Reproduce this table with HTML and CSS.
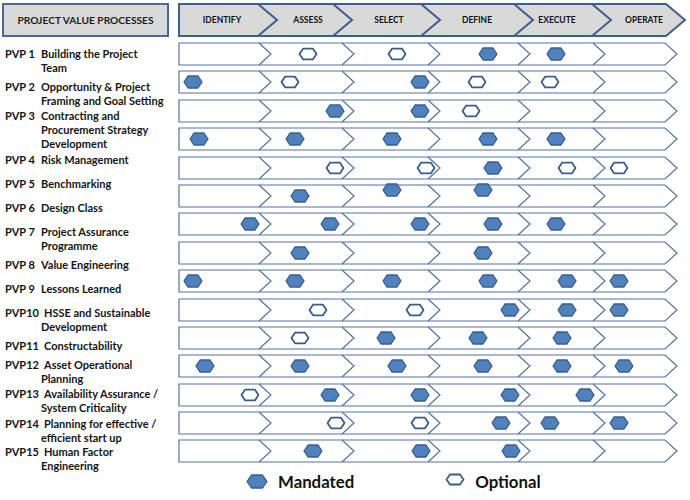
FILE: index.html
```html
<!DOCTYPE html>
<html lang="en">
<head>
<meta charset="utf-8">
<title>Project Value Processes</title>
<link rel="stylesheet" href="styles.css">
</head>
<body>
<svg class="defs" width="0" height="0" aria-hidden="true">
  <defs>
    <polygon id="m" class="hex-m" points="-9,0 -5,-6 5,-6 9,0 5,6 -5,6"/>
    <polygon id="o" class="hex-o" points="-8.5,0 -5,-5.3 5,-5.3 8.5,0 5,5.3 -5,5.3"/>
    <g id="track">
      <polygon class="track-shape" points="1,1 487,1 499,12 487,23 1,23"/>
      <polyline class="track-line" points="81,1 93,12 81,23"/>
      <polyline class="track-line" points="164,1 176,12 164,23"/>
      <polyline class="track-line" points="250,1 262,12 250,23"/>
      <polyline class="track-line" points="340,1 352,12 340,23"/>
      <polyline class="track-line" points="415,1 427,12 415,23"/>
    </g>
  </defs>
</svg>

<div class="page">
  <header class="head">
    <div class="title">PROJECT VALUE PROCESSES</div>
    <svg class="phases" width="509" height="34" viewBox="0 0 509 34">
      <polygon class="phase-shape" points="1,1 488,1 507,17 488,33 1,33"/>
      <polyline class="phase-line" points="80,1 99,17 80,33"/>
      <polyline class="phase-line" points="155,1 174,17 155,33"/>
      <polyline class="phase-line" points="243,1 262,17 243,33"/>
      <polyline class="phase-line" points="336,1 355,17 336,33"/>
      <polyline class="phase-line" points="414,1 433,17 414,33"/>
      <text class="phase-text" x="44" y="20">IDENTIFY</text>
      <text class="phase-text" x="130" y="20">ASSESS</text>
      <text class="phase-text" x="211" y="20">SELECT</text>
      <text class="phase-text" x="299" y="20">DEFINE</text>
      <text class="phase-text" x="379" y="20">EXECUTE</text>
      <text class="phase-text" x="466" y="20">OPERATE</text>
    </svg>
  </header>

  <div class="body">
    <ol class="labels">
      <li><span class="num">PVP 1</span>Building the Project<br>Team</li>
      <li class="sp-md"><span class="num">PVP 2</span>Opportunity &amp; Project<br>Framing and Goal Setting</li>
      <li class="sp-sm"><span class="num">PVP 3</span>Contracting and<br>Procurement Strategy<br>Development</li>
      <li class="sp-sm"><span class="num">PVP 4</span>Risk Management</li>
      <li class="sp-lg"><span class="num">PVP 5</span>Benchmarking</li>
      <li class="sp-lg"><span class="num">PVP 6</span>Design Class</li>
      <li class="sp-lg"><span class="num">PVP 7</span>Project Assurance<br>Programme</li>
      <li class="sp-md"><span class="num">PVP 8</span>Value Engineering</li>
      <li class="sp-lg"><span class="num">PVP 9</span>Lessons Learned</li>
      <li class="sp-lg"><span class="num num-wide">PVP10</span>HSSE and Sustainable<br>Development</li>
      <li class="sp-md"><span class="num num-wide">PVP11</span>Constructability</li>
      <li class="sp-md"><span class="num num-wide">PVP12</span>Asset Operational<br>Planning</li>
      <li class="sp-sm"><span class="num num-wide">PVP13</span>Availability Assurance /<br>System Criticality</li>
      <li class="sp-sm"><span class="num num-wide">PVP14</span>Planning for effective /<br>efficient start up</li>
      <li><span class="num num-wide">PVP15</span>Human Factor<br>Engineering</li>
    </ol>

    <div class="tracks">
      <svg class="track" width="502" height="24" viewBox="0 0 502 24">
        <use href="#track"/>
        <use href="#o" x="130" y="12"/><use href="#o" x="219" y="12"/>
        <use href="#m" x="310" y="12"/><use href="#m" x="378" y="12"/>
      </svg>
      <svg class="track" width="502" height="24" viewBox="0 0 502 24">
        <use href="#track"/>
        <use href="#m" x="15" y="12"/><use href="#o" x="112" y="12"/>
        <use href="#m" x="242" y="12"/><use href="#o" x="299" y="12"/>
        <use href="#o" x="372" y="12"/>
      </svg>
      <svg class="track" width="502" height="24" viewBox="0 0 502 24">
        <use href="#track"/>
        <use href="#m" x="157" y="12"/><use href="#m" x="242" y="12"/>
        <use href="#o" x="293" y="12"/>
      </svg>
      <svg class="track" width="502" height="24" viewBox="0 0 502 24">
        <use href="#track"/>
        <use href="#m" x="21" y="12"/><use href="#m" x="117" y="12"/>
        <use href="#m" x="214" y="12"/><use href="#m" x="310" y="12"/>
        <use href="#m" x="378" y="12"/>
      </svg>
      <svg class="track" width="502" height="24" viewBox="0 0 502 24">
        <use href="#track"/>
        <use href="#o" x="157" y="12"/><use href="#o" x="248" y="12"/>
        <use href="#m" x="315" y="12"/><use href="#o" x="389" y="12"/>
        <use href="#o" x="441" y="12"/>
      </svg>
      <svg class="track" width="502" height="24" viewBox="0 0 502 24">
        <use href="#track"/>
        <use href="#m" x="122" y="12"/><use href="#m" x="214" y="6"/>
        <use href="#m" x="305" y="6"/>
      </svg>
      <svg class="track" width="502" height="24" viewBox="0 0 502 24">
        <use href="#track"/>
        <use href="#m" x="72" y="12"/><use href="#m" x="152" y="12"/>
        <use href="#m" x="242" y="12"/><use href="#m" x="315" y="12"/>
        <use href="#m" x="378" y="12"/>
      </svg>
      <svg class="track" width="502" height="24" viewBox="0 0 502 24">
        <use href="#track"/>
        <use href="#m" x="122" y="12"/><use href="#m" x="305" y="12"/>
      </svg>
      <svg class="track" width="502" height="24" viewBox="0 0 502 24">
        <use href="#track"/>
        <use href="#m" x="15" y="12"/><use href="#m" x="117" y="12"/>
        <use href="#m" x="214" y="12"/><use href="#m" x="310" y="12"/>
        <use href="#m" x="389" y="12"/><use href="#m" x="441" y="12"/>
      </svg>
      <svg class="track" width="502" height="24" viewBox="0 0 502 24">
        <use href="#track"/>
        <use href="#o" x="140" y="12"/><use href="#o" x="237" y="12"/>
        <use href="#m" x="332" y="12"/><use href="#m" x="389" y="12"/>
        <use href="#m" x="441" y="12"/>
      </svg>
      <svg class="track" width="502" height="24" viewBox="0 0 502 24">
        <use href="#track"/>
        <use href="#o" x="122" y="12"/><use href="#m" x="208" y="12"/>
        <use href="#m" x="300" y="12"/><use href="#m" x="384" y="12"/>
      </svg>
      <svg class="track" width="502" height="24" viewBox="0 0 502 24">
        <use href="#track"/>
        <use href="#m" x="27" y="12"/><use href="#m" x="122" y="12"/>
        <use href="#m" x="219" y="12"/><use href="#m" x="305" y="12"/>
        <use href="#m" x="384" y="12"/><use href="#m" x="446" y="12"/>
      </svg>
      <svg class="track" width="502" height="24" viewBox="0 0 502 24">
        <use href="#track"/>
        <use href="#o" x="72" y="12"/><use href="#m" x="152" y="12"/>
        <use href="#m" x="242" y="12"/><use href="#m" x="332" y="12"/>
        <use href="#m" x="407" y="12"/>
      </svg>
      <svg class="track" width="502" height="24" viewBox="0 0 502 24">
        <use href="#track"/>
        <use href="#o" x="158" y="12"/><use href="#o" x="242" y="12"/>
        <use href="#m" x="323" y="12"/><use href="#m" x="372" y="12"/>
        <use href="#m" x="441" y="12"/>
      </svg>
      <svg class="track" width="502" height="24" viewBox="0 0 502 24">
        <use href="#track"/>
        <use href="#m" x="135" y="12"/><use href="#m" x="243" y="12"/>
        <use href="#m" x="333" y="12"/>
      </svg>

      <div class="legend">
        <svg class="legend-icon" width="22" height="15" viewBox="-11 -7.5 22 15">
          <polygon class="hex-m" points="-10,0 -5.5,-6.5 5.5,-6.5 10,0 5.5,6.5 -5.5,6.5"/>
        </svg>
        <span class="legend-text">Mandated</span>
        <svg class="legend-icon legend-icon-o" width="20" height="13" viewBox="-10 -6.5 20 13">
          <polygon class="hex-o" points="-8.5,0 -5,-5 5,-5 8.5,0 5,5 -5,5"/>
        </svg>
        <span class="legend-text">Optional</span>
      </div>
    </div>
  </div>
</div>
</body>
</html>
```
FILE: styles.css
```css
* { box-sizing: border-box; }

body {
  margin: 0;
  background: #ffffff;
  font-family: Lato, "Open Sans", "DejaVu Sans", sans-serif;
  color: #161616;
}

.defs { position: absolute; width: 0; height: 0; overflow: hidden; }

.page {
  width: 690px;
  height: 500px;
  padding-top: 3px;
  overflow: hidden;
}

/* ---------- header ---------- */
.head {
  display: flex;
  align-items: flex-start;
}

.title {
  margin-left: 2px;
  width: 167px;
  height: 34px;
  background: #d9d9d9;
  border: 2px solid #4a6a95;
  display: flex;
  align-items: center;
  justify-content: center;
  font-weight: 700;
  font-size: 10.2px;
  color: #1d1d1d;
}

.phases {
  display: block;
  margin-left: 9px;
}

.phase-shape {
  fill: #d9d9d9;
  stroke: #3e5f8e;
  stroke-width: 2;
  stroke-linejoin: miter;
}

.phase-line {
  fill: none;
  stroke: #3e5f8e;
  stroke-width: 2;
}

.phase-text {
  font-family: Lato, "Open Sans", sans-serif;
  font-weight: 700;
  font-size: 8.5px;
  fill: #111111;
  text-anchor: middle;
}

/* ---------- body ---------- */
.body {
  display: flex;
  margin-top: 5px;
}

.labels {
  list-style: none;
  margin: 0;
  padding: 5px 0 0 5px;
  width: 178px;
  flex: none;
  font-weight: 700;
  font-size: 11px;
  line-height: 14px;
  color: #141414;
}

.labels li {
  padding-left: 36px;
  text-indent: -36px;
  white-space: nowrap;
}

.num {
  display: inline-block;
  width: 36px;
  text-indent: 0;
}

.num-wide { width: 39px; }

.sp-sm { margin-top: 1.2px; }
.sp-md { margin-top: 5.2px; }
.sp-lg { margin-top: 10px; }

.tracks {
  display: flex;
  flex-direction: column;
  gap: 4.4px;
}

.track {
  display: block;
  overflow: visible;
}

.track-shape {
  fill: #ffffff;
  stroke: #5473a1;
  stroke-width: 1.2;
}

.track-line {
  fill: none;
  stroke: #5473a1;
  stroke-width: 1.2;
}

.hex-m {
  fill: #4f81bd;
  stroke: #385d8a;
  stroke-width: 1.3;
  stroke-linejoin: round;
}

.hex-o {
  fill: #ffffff;
  stroke: #385d8a;
  stroke-width: 1.8;
  stroke-linejoin: round;
}

/* ---------- legend ---------- */
.legend {
  display: flex;
  align-items: center;
  height: 20px;
  margin-top: 4px;
  padding-left: 68px;
}

.legend-icon { display: block; flex: none; }
.legend-icon-o { margin-left: 91px; margin-top: -4px; }

.legend-text {
  margin-left: 10px;
  font-weight: 700;
  font-size: 16.8px;
  color: #111;
}
```
